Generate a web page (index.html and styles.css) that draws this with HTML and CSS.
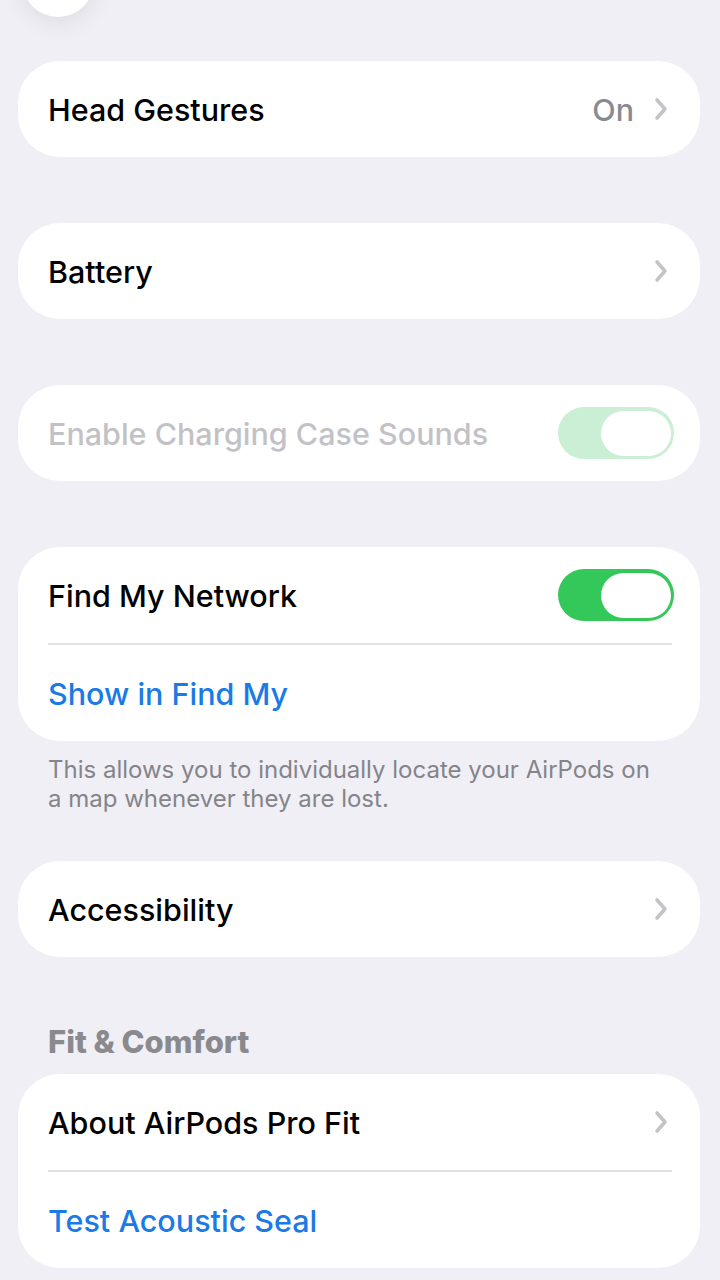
FILE: index.html
```html
<!DOCTYPE html>
<html lang="en">
<head>
    <meta charset="UTF-8">
    <meta name="viewport" content="width=device-width, initial-scale=1.0">
    <title>AirPods Settings</title>
    <link rel="stylesheet" href="styles.css">
</head>
<body>

<div class="top">
    <div class="round-btn"></div>
</div>

<div class="list">

    <!-- Head gestures -->
    <section class="card">
        <div class="row">
            <span class="label">Head Gestures</span>
            <span class="value">On</span>
            <svg class="chevron" viewBox="0 0 14 24"><path d="M3 3 L11 12 L3 21" /></svg>
        </div>
    </section>

    <!-- Battery -->
    <section class="card">
        <div class="row">
            <span class="label">Battery</span>
            <svg class="chevron" viewBox="0 0 14 24"><path d="M3 3 L11 12 L3 21" /></svg>
        </div>
    </section>

    <!-- Case sounds (disabled) -->
    <section class="card">
        <div class="row disabled">
            <span class="label">Enable Charging Case Sounds</span>
            <span class="toggle on"><span class="knob"></span></span>
        </div>
    </section>

    <!-- Find My -->
    <section class="card">
        <div class="row">
            <span class="label">Find My Network</span>
            <span class="toggle on"><span class="knob"></span></span>
        </div>
        <div class="divider"></div>
        <div class="row">
            <span class="label link">Show in Find My</span>
        </div>
    </section>
    <p class="footer">This allows you to individually locate your AirPods on a map whenever they are lost.</p>

    <!-- Accessibility -->
    <section class="card">
        <div class="row">
            <span class="label">Accessibility</span>
            <svg class="chevron" viewBox="0 0 14 24"><path d="M3 3 L11 12 L3 21" /></svg>
        </div>
    </section>

    <h2 class="section-title">Fit &amp; Comfort</h2>
    <section class="card">
        <div class="row">
            <span class="label">About AirPods Pro Fit</span>
            <svg class="chevron" viewBox="0 0 14 24"><path d="M3 3 L11 12 L3 21" /></svg>
        </div>
        <div class="divider"></div>
        <div class="row">
            <span class="label link">Test Acoustic Seal</span>
        </div>
    </section>

</div>

</body>
</html>
```

FILE: styles.css
```css
/* Settings list */
body {
    margin: 0;
    padding: 0;
    background-color: #f0eff5;
    font-family: Inter, "Noto Sans", sans-serif;
    color: #000;
    overflow: hidden;
}
.top {
    display: flow-root;
    height: 61px;
    padding-left: 22px;
}
.round-btn {
    width: 72px;
    height: 72px;
    margin-top: -55px;
    border-radius: 50%;
    background-color: #fff;
    box-shadow: 0 6px 24px rgba(0, 0, 0, 0.08);
}
.list {
    padding: 0 20px 0 18px;
}
.card {
    background-color: #fff;
    border-radius: 42px;
    margin-bottom: 66px;
    overflow: hidden;
}
.row {
    height: 96px;
    display: flex;
    align-items: center;
    padding: 0 32px 0 30px;
}
.label {
    flex: 1;
    font-size: 30.5px;
    font-weight: 500;
    letter-spacing: 0;
}
.link {
    color: #1a7ae6;
}
.value {
    font-size: 30.5px;
    font-weight: 500;
    color: #8a8a8e;
    margin-right: 20px;
}
.chevron {
    width: 14px;
    height: 24px;
    fill: none;
    stroke: #c4c4c8;
    stroke-width: 3.6;
    stroke-linecap: round;
    stroke-linejoin: round;
}
.divider {
    height: 2px;
    background-color: #e2e2e6;
    margin: 0 28px 0 30px;
}
.toggle {
    width: 116px;
    height: 52px;
    border-radius: 26px;
    background-color: #34c759;
    display: flex;
    align-items: center;
    justify-content: flex-end;
    padding: 0 3px;
    box-sizing: border-box;
    margin-right: -6px;
}
.knob {
    width: 70px;
    height: 45px;
    border-radius: 23px;
    background-color: #fff;
}
.disabled .label {
    color: #c2c2c6;
}
.disabled .toggle {
    background-color: #caefd5;
}
.footer {
    margin: -52px 0 48px 30px;
    padding-right: 40px;
    font-size: 24px;
    line-height: 29px;
    color: #848489;
}
.section-title {
    margin: 2px 0 14px 30px;
    font-size: 31px;
    font-weight: 800;
    color: #8a8a8e;
}
```
